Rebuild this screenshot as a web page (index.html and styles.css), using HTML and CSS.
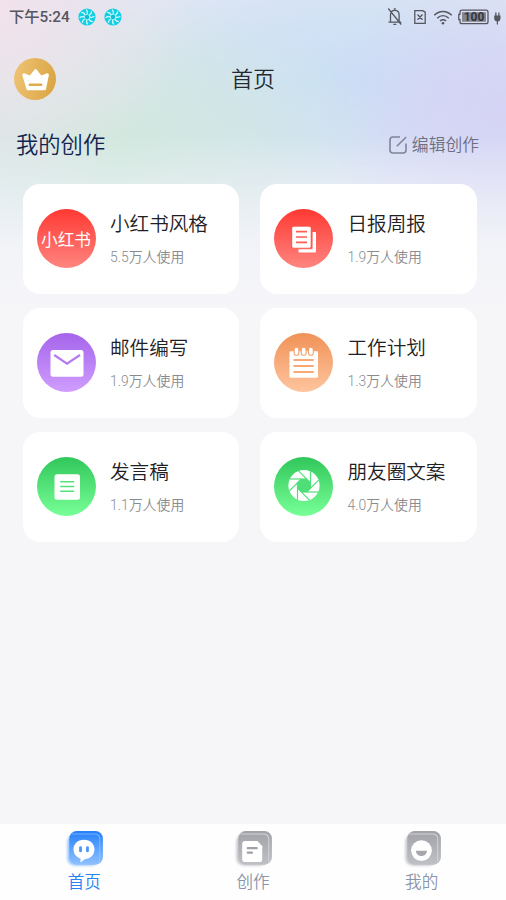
FILE: index.html
```html
<!DOCTYPE html>
<html lang="zh-CN">
<head>
<meta charset="utf-8">
<title>首页</title>
<link rel="stylesheet" href="styles.css">
</head>
<body>
<svg class="defs" width="0" height="0" aria-hidden="true">
  <defs>
    <linearGradient id="blueTile" x1="0" y1="0" x2="0" y2="1"><stop offset="0" stop-color="#2580fa"/><stop offset="1" stop-color="#8fc1ff"/></linearGradient>
    <linearGradient id="grayTile" x1="0" y1="0" x2="0" y2="1"><stop offset="0" stop-color="#a2a3a9"/><stop offset="1" stop-color="#bfc0c6"/></linearGradient>
    <filter id="soft" x="-20%" y="-20%" width="140%" height="140%"><feGaussianBlur stdDeviation="1.2"/></filter>
    <symbol id="swirl" viewBox="-9 -9 18 18">
      <circle r="8.600" fill="#12cfe3"/>
      <g fill="none" stroke="#d8fbff" stroke-width="1.300">
        <path id="arm" d="M1 -1.500Q4.500 -2.500 4.600 -5.800"/>
        <use href="#arm" transform="rotate(45)"/><use href="#arm" transform="rotate(90)"/><use href="#arm" transform="rotate(135)"/><use href="#arm" transform="rotate(180)"/><use href="#arm" transform="rotate(225)"/><use href="#arm" transform="rotate(270)"/><use href="#arm" transform="rotate(315)"/>
      </g>
      <circle r="2.200" fill="#12bdd2"/>
    </symbol>
  </defs>
</svg>
<div class="screen">
  <div class="status">
    <span class="time">下午5:24</span>
    <svg class="app" width="18" height="18"><use href="#swirl"/></svg>
    <svg class="app" width="18" height="18"><use href="#swirl"/></svg>
    <svg class="system" width="118" height="24" viewBox="0 0 118 24">
      <g fill="none" stroke="#55565e" stroke-width="1.300">
        <path d="M.5 18.200h12.700M2.500 18v-7c0-3 1.500-4.600 4.300-4.600s4.300 1.600 4.300 4.600v7M5.800 4.800h2M5.300 20.300h3M.2 4.500l13 16"/>
        <path d="M26.800 6.700h8l2.400 1.500v11.200H26.800zM29.500 10.500l5 5.300M34.500 10.500l-5 5.300"/>
        <path d="M46.300 11.200c5-5 12.400-5 17.400 0M49.200 14.200c3.500-3.300 8.100-3.300 11.600 0M52 17c1.800-1.500 4.200-1.500 6 0" stroke-width="1.500"/>
        <path d="M74 6.200h24q2 0 2 2v9.500q0 2-2 2h-24q-2 0-2-2v-2h-1.200v-5.400H72V8.200q0-2 2-2z"/>
      </g>
      <circle cx="55" cy="19.200" r="1.300" fill="#55565e"/>
      <path d="M74 8.200h24v9.600H74z" fill="#85858d"/>
      <text class="charge" x="86" y="17" text-anchor="middle">100</text>
      <path d="M107.200 8.500v3h-1v2.500q0 3 2.600 3.500v3h1.200v-3q2.500-.5 2.500-3.500v-2.500h-1v-3h-1.200v3h-1.800v-3z" fill="#55565e"/>
    </svg>
  </div>
  <header class="header">
    <div class="vip">
      <svg width="42" height="42" viewBox="0 0 42 42"><path d="M10.200 15.200l5.700 2.400 4.700-6.100q1-1.100 2 0l4.700 6.100 5.700-2.400q2 .1 1.900 1.700L32 31q-.3 1.200-1.500 1.200H14q-1.200 0-1.500-1.200L8.200 16.900q.1-1.600 2-1.700z" fill="#fff"/><path d="M15.800 26.800h11.500" stroke="#e0ac4f" stroke-width="2.400" stroke-linecap="round"/></svg>
    </div>
    <h1>首页</h1>
  </header>
  <div class="section">
    <h2>我的创作</h2>
    <div class="edit">
      <svg width="18" height="18" viewBox="0 0 18 18" fill="none" stroke="#80849a" stroke-width="1.600"><path d="M11 1H4Q1 1 1 4v10q0 3 3 3h10q3 0 3-3V7.500M7.800 10.200L17.200 1"/></svg>
      <span>编辑创作</span>
    </div>
  </div>
  <main class="grid">
    <div class="card">
      <div class="icon red"><span>小红书</span></div>
      <div class="info"><h3>小红书风格</h3><p>5.5万人使用</p></div>
    </div>
    <div class="card">
      <div class="icon red"><svg viewBox="0 0 59 59"><path d="M37.500 23H41q1 0 1 1v18.500q0 1-1 1H25.500q-1 0-1-1v-2.300H38.500V23z" fill="#fff"/><rect x="17.200" y="16.800" width="21" height="22.500" rx="1.500" fill="#ff574f"/><rect x="18.200" y="17.800" width="18.500" height="21" rx="1.500" fill="#fff"/><path d="M22 22.700h11M22 28h11M22 33.400h11" stroke="#ff5c54" stroke-width="1.700"/></svg></div>
      <div class="info"><h3>日报周报</h3><p>1.9万人使用</p></div>
    </div>
    <div class="card">
      <div class="icon purple"><svg viewBox="0 0 59 59"><rect x="13.500" y="17" width="33" height="26.800" rx="2.500" fill="#fff"/><path d="M17.200 22L30 30.600 43 22" fill="none" stroke="#b67af2" stroke-width="2.300"/></svg></div>
      <div class="info"><h3>邮件编写</h3><p>1.9万人使用</p></div>
    </div>
    <div class="card">
      <div class="icon orange"><svg viewBox="0 0 59 59"><rect x="15.500" y="18.200" width="28.500" height="26.500" rx="1.200" fill="#fff"/><g fill="#fff" stroke="#f4a26d" stroke-width="1.100"><rect x="20.100" y="14.300" width="4.800" height="8" rx="2.400"/><rect x="27.300" y="14.300" width="4.800" height="8" rx="2.400"/><rect x="34.500" y="14.300" width="4.800" height="8" rx="2.400"/></g><path d="M19.500 27h20.200M19.500 33h20.200M19.500 39h20.200" stroke="#f8a873" stroke-width="2.100"/></svg></div>
      <div class="info"><h3>工作计划</h3><p>1.3万人使用</p></div>
    </div>
    <div class="card">
      <div class="icon green"><svg viewBox="0 0 59 59"><rect x="17.500" y="17.300" width="25.500" height="25.500" rx="2.500" fill="#fff"/><path d="M23.200 24.700h14M23.200 29.600h14M23.200 34.300h14" stroke="#52e37d" stroke-width="1.500"/></svg></div>
      <div class="info"><h3>发言稿</h3><p>1.1万人使用</p></div>
    </div>
    <div class="card">
      <div class="icon green"><svg viewBox="0 0 59 59"><g transform="translate(30 28.500)"><circle r="15.600" fill="#fff"/><path d="M-2.700-6.500h5.400l3.800 3.800v5.400l-3.800 3.800h-5.400l-3.800-3.800v-5.400z" fill="#50de79"/><g stroke="#50de79" stroke-width="1.200"><path id="blade" d="M2.700-6.500H-14.200"/><use href="#blade" transform="rotate(45)"/><use href="#blade" transform="rotate(90)"/><use href="#blade" transform="rotate(135)"/><use href="#blade" transform="rotate(180)"/><use href="#blade" transform="rotate(225)"/><use href="#blade" transform="rotate(270)"/><use href="#blade" transform="rotate(315)"/></g></g></svg></div>
      <div class="info"><h3>朋友圈文案</h3><p>4.0万人使用</p></div>
    </div>
  </main>
  <nav class="tabs">
    <div class="tab active">
      <svg width="42" height="42" viewBox="0 0 40 40"><rect x="4" y="5" width="30" height="30" rx="7" fill="#8cbcfa" filter="url(#soft)" opacity=".8"/><rect x="6" y="2" width="32" height="32" rx="7" fill="url(#blueTile)"/><path d="M8 4.800h22q5 0 5 5V32" fill="none" stroke="#a6ceff" stroke-width="1" opacity=".6"/><path d="M20 10.200c6 0 10 3.900 10 9.200s-3.800 9-9.200 9.500l-4.300 3 .3-3.500c-4-1.300-6.800-4.500-6.800-9 0-5.300 4-9.200 10-9.200z" fill="#fff"/><path d="M16.700 17.700v3.200M23.300 17.700v3.200" stroke="#4e97f7" stroke-width="2.700" stroke-linecap="round"/></svg>
      <span>首页</span>
    </div>
    <div class="tab">
      <svg width="42" height="42" viewBox="0 0 40 40"><rect x="4" y="5" width="30" height="30" rx="7" fill="#b6b7bc" filter="url(#soft)" opacity=".7"/><rect x="6" y="2" width="32" height="32" rx="7" fill="url(#grayTile)"/><path d="M8 4.800h22q5 0 5 5V32" fill="none" stroke="#d1d2d6" stroke-width="1"/><path d="M12.500 11.500h11.800l4.500 5v12.200q0 2.800-2.800 2.800H12.500q-2.800 0-2.800-2.800V14.300q0-2.800 2.800-2.800z" fill="#fff"/><path d="M15 18.300h8.500M15 22.500h4" stroke="#9fa0a6" stroke-width="2.200" stroke-linecap="round"/></svg>
      <span>创作</span>
    </div>
    <div class="tab">
      <svg width="42" height="42" viewBox="0 0 40 40"><rect x="4" y="5" width="30" height="30" rx="7" fill="#b6b7bc" filter="url(#soft)" opacity=".7"/><rect x="6" y="2" width="32" height="32" rx="7" fill="url(#grayTile)"/><path d="M8 4.800h22q5 0 5 5V32" fill="none" stroke="#d1d2d6" stroke-width="1"/><circle cx="19.500" cy="20.500" r="9.900" fill="#fff"/><path d="M14.200 20.600h10.500c0 2.900-2.200 5-5.200 5s-5.300-2.100-5.300-5z" fill="#a6a7ad"/></svg>
      <span>我的</span>
    </div>
  </nav>
</div>
</body>
</html>
```

FILE: styles.css
```css
* { box-sizing: border-box; }
body, h1, h2, h3, p { margin: 0; font-weight: 350; }
body { font-family: Roboto, "Noto Sans CJK SC", sans-serif; }
svg { display: block; flex: none; }
.defs { position: absolute; }
.screen {
  width: 506px;
  height: 900px;
  display: flex;
  flex-direction: column;
  overflow: hidden;
  background:
    linear-gradient(rgba(246, 246, 249, 0) 135px, rgba(246, 246, 249, .35) 185px, rgba(246, 246, 249, .82) 245px, #f6f6f9 310px),
    radial-gradient(circle at 0 10px, #f2e2eb, rgba(242, 226, 235, .5) 90px, rgba(242, 226, 235, 0) 190px),
    radial-gradient(ellipse 270px 150px at 110px 140px, #d0e8dd, rgba(208, 232, 221, .6) 45%, rgba(208, 232, 221, 0)),
    radial-gradient(ellipse 190px 140px at 506px 110px, #d5d3f5, rgba(213, 211, 245, .65) 45%, rgba(213, 211, 245, 0)),
    radial-gradient(ellipse 240px 120px at 345px 80px, #c9dff5, rgba(201, 223, 245, .6) 50%, rgba(201, 223, 245, 0)),
    #dfe6f4;
}
.status {
  height: 34px;
  display: flex;
  align-items: center;
  padding-left: 9px;
  color: #55565e;
}
.time { width: 69px; font-size: 15.300px; font-weight: 500; line-height: 34px; white-space: nowrap; }
.app { margin-right: 8px; }
.system { margin: 0 0 2px auto; }
.charge { font: 700 12px Roboto, sans-serif; fill: #35363d; }
.header {
  height: 90px;
  display: grid;
  grid-template-columns: 42px 1fr 42px;
  align-items: center;
  padding: 0 14px;
}
.vip { width: 42px; height: 42px; border-radius: 50%; background: linear-gradient(100deg, #efc476, #d9a340); }
h1 { padding-top: 2px; text-align: center; font-size: 22px; line-height: 32px; color: #26292e; }
.section {
  height: 60px;
  display: flex;
  align-items: center;
  justify-content: space-between;
  padding: 0 27px 18px 16px;
}
h2 { font-size: 22.300px; line-height: 32px; color: #11234f; }
.edit { display: flex; align-items: center; gap: 5px; font-size: 16.800px; line-height: 24px; color: #6c7082; }
.grid {
  flex: 1;
  display: grid;
  grid-template-columns: 216.500px 216.500px;
  grid-auto-rows: 110px;
  gap: 14px 21px;
  padding-left: 22.500px;
}
.card { display: flex; align-items: center; gap: 14.500px; padding: 0 0 1px 14px; background: #fff; border-radius: 17px; }
.icon { width: 59px; height: 59px; border-radius: 50%; display: grid; place-items: center; color: #fff; font-size: 16.700px; font-weight: 400; flex: none; white-space: nowrap; }
.icon span { padding-top: 1px; }
.icon svg { width: 59px; height: 59px; }
.red { background: linear-gradient(#ff3932, #ff8580); }
.purple { background: linear-gradient(#a565eb, #cf9dfe); }
.orange { background: linear-gradient(#f09257, #ffc49e); }
.green { background: linear-gradient(#31c75a, #78ff98); }
.info { display: flex; flex-direction: column; gap: 9px; white-space: nowrap; }
h3 { font-size: 19.600px; line-height: 28px; color: #1f2024; }
p { font-size: 13.900px; line-height: 18px; color: #8a8b90; }
.tabs { height: 76px; display: grid; grid-template-columns: repeat(3, 1fr); background: #fefefe; }
.tab { display: flex; flex-direction: column; align-items: center; padding-top: 5px; color: #8c94aa; font-size: 16.600px; line-height: 24px; }
.active { color: #2783f1; }
```
